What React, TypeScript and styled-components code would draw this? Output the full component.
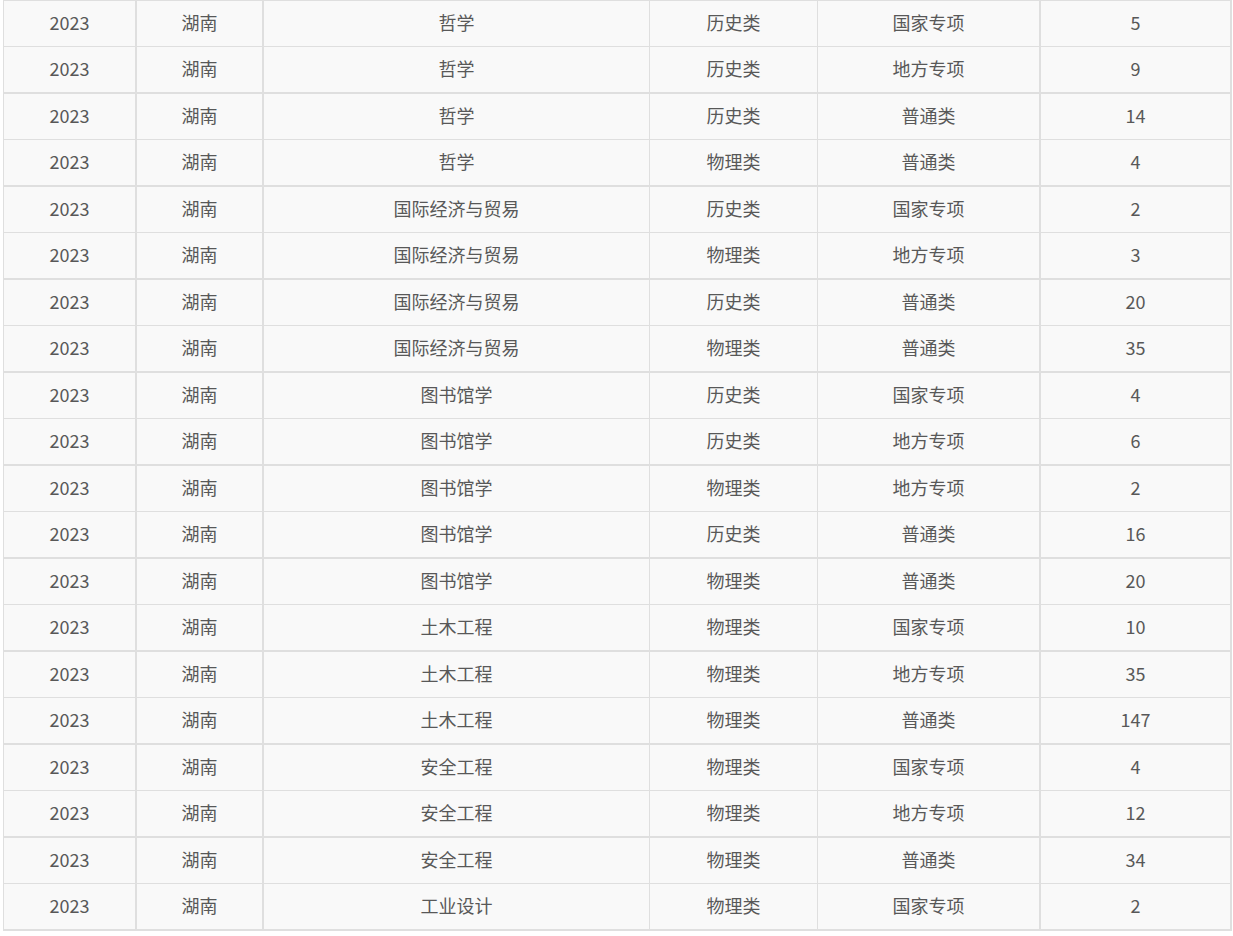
import React from "react"
import styled, { createGlobalStyle } from "styled-components"

const GlobalStyle = createGlobalStyle`
  html, body {
    margin: 0;
    padding: 0;
    background: #ffffff;
  }
`

const Wrapper = styled.div`
  padding-left: 3px;
  width: 1230px;
`

const Table = styled.table`
  border-collapse: separate;
  border-spacing: 0;
  border-top: 1px solid #dfdfdf;
  border-left: 1px solid #dfdfdf;
  table-layout: fixed;
  font-family: "Noto Sans CJK SC", "Noto Sans", sans-serif;
  font-size: 18px;
  color: #585858;
  background: #f9f9f9;
`

const Cell = styled.td<{ $right: number; $bottom: number }>`
  box-sizing: border-box;
  height: ${(p) => 45 + p.$bottom}px;
  padding: 0 0 2px 0;
  text-align: center;
  vertical-align: middle;
  line-height: 43px;
  white-space: nowrap;
  border-right: ${(p) => p.$right}px solid #dfdfdf;
  border-bottom: ${(p) => p.$bottom}px solid #dfdfdf;
`

// content widths and right border widths per column
const columns = [
  { width: 131, border: 2 },
  { width: 125, border: 2 },
  { width: 385, border: 1 },
  { width: 167, border: 1 },
  { width: 221, border: 2 },
  { width: 189, border: 2 },
]

const rows: [string, string, string, string][] = [
  ["哲学", "历史类", "国家专项", "5"],
  ["哲学", "历史类", "地方专项", "9"],
  ["哲学", "历史类", "普通类", "14"],
  ["哲学", "物理类", "普通类", "4"],
  ["国际经济与贸易", "历史类", "国家专项", "2"],
  ["国际经济与贸易", "物理类", "地方专项", "3"],
  ["国际经济与贸易", "历史类", "普通类", "20"],
  ["国际经济与贸易", "物理类", "普通类", "35"],
  ["图书馆学", "历史类", "国家专项", "4"],
  ["图书馆学", "历史类", "地方专项", "6"],
  ["图书馆学", "物理类", "地方专项", "2"],
  ["图书馆学", "历史类", "普通类", "16"],
  ["图书馆学", "物理类", "普通类", "20"],
  ["土木工程", "物理类", "国家专项", "10"],
  ["土木工程", "物理类", "地方专项", "35"],
  ["土木工程", "物理类", "普通类", "147"],
  ["安全工程", "物理类", "国家专项", "4"],
  ["安全工程", "物理类", "地方专项", "12"],
  ["安全工程", "物理类", "普通类", "34"],
  ["工业设计", "物理类", "国家专项", "2"],
]

const App = () => {
  return (
    <Wrapper>
      <GlobalStyle />
      <Table>
        <colgroup>
          {columns.map((c, i) => (
            <col key={i} style={{ width: c.width + c.border }} />
          ))}
        </colgroup>
        <tbody>
          {rows.map((r, i) => {
            const values = ["2023", "湖南", ...r]
            const bottom = i % 2 === 1 ? 2 : 1
            return (
              <tr key={i}>
                {values.map((v, j) => (
                  <Cell key={j} $right={columns[j].border} $bottom={bottom}>
                    {v}
                  </Cell>
                ))}
              </tr>
            )
          })}
        </tbody>
      </Table>
    </Wrapper>
  )
}

export default App
